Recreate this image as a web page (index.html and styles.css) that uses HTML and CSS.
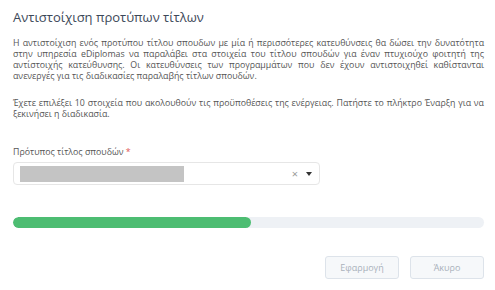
FILE: index.html
```html
<!DOCTYPE html>
<html lang="el">
<head>
    <meta charset="UTF-8">
    <meta name="viewport" content="width=device-width, initial-scale=1.0">
    <title>Αντιστοίχιση προτύπων τίτλων</title>
    <link rel="stylesheet" href="styles.css">
</head>
<body>
    <div class="dialog">
        <h1 class="dialog-title">Αντιστοίχιση προτύπων τίτλων</h1>
        <p class="text">Η αντιστοίχιση ενός προτύπου τίτλου σπουδων με μία ή περισσότερες κατευθύνσεις θα δώσει την δυνατότητα στην υπηρεσία eDiplomas να παραλάβει στα στοιχεία του τίτλου σπουδών για έναν πτυχιούχο φοιτητή της αντίστοιχής κατεύθυνσης. Οι κατευθύνσεις των προγραμμάτων που δεν έχουν αντιστοιχηθεί καθίστανται ανενεργές για τις διαδικασίες παραλαβής τίτλων σπουδών.</p>
        <p class="text">Έχετε επιλέξει 10 στοιχεία που ακολουθούν τις προϋποθέσεις της ενέργειας. Πατήστε το πλήκτρο Έναρξη για να ξεκινήσει η διαδικασία.</p>

        <div class="field">
            <label class="field-label">Πρότυπος τίτλος σπουδών <span class="req">*</span></label>
            <div class="select">
                <span class="select-value"></span>
                <span class="select-clear">&times;</span>
                <span class="select-arrow"></span>
            </div>
        </div>

        <div class="progress">
            <div class="progress-bar" style="width: 50.5%"></div>
        </div>

        <div class="actions">
            <button class="btn" disabled>Εφαρμογή</button>
            <button class="btn" disabled>Άκυρο</button>
        </div>
    </div>
</body>
</html>
```

FILE: styles.css
```css
body {
    margin: 0;
    background-color: #fff;
    font-family: "Open Sans", Arial, sans-serif;
    color: #555;
}

.dialog {
    padding: 8px 11px 0 13px;
}

.dialog-title {
    margin: 0 0 12px;
    font-size: 13px;
    font-weight: 400;
    color: #3c4858;
    line-height: 18px;
}

.text {
    margin: 0 0 16px;
    font-size: 8.8px;
    line-height: 11px;
    text-align: justify;
}

.field {
    margin-top: 27px;
}

.field-label {
    display: block;
    font-size: 8.8px;
    line-height: 11px;
    margin-bottom: 4px;
}

.req {
    color: #e05555;
}

.select {
    box-sizing: border-box;
    width: 307px;
    height: 23px;
    border: 1px solid #e6e6e6;
    border-radius: 4px;
    display: flex;
    align-items: center;
    padding: 0 7px 0 6px;
}

.select-value {
    width: 164px;
    height: 16px;
    background-color: #c4c4c4;
}

.select-clear {
    margin-left: auto;
    font-size: 11px;
    color: #999;
    margin-right: 8px;
}

.select-arrow {
    width: 0;
    height: 0;
    border-left: 3.5px solid transparent;
    border-right: 3.5px solid transparent;
    border-top: 4px solid #333;
}

.progress {
    margin-top: 32px;
    height: 11px;
    background-color: #eef1f5;
    border-radius: 6px;
    overflow: hidden;
}

.progress-bar {
    height: 100%;
    background-color: #4dbd72;
    border-radius: 6px;
}

.actions {
    display: flex;
    justify-content: flex-end;
    gap: 11px;
    margin-top: 28px;
}

.btn {
    width: 74px;
    height: 23px;
    border: 1px solid #dde3ea;
    border-radius: 3px;
    background-color: #f6f8fa;
    color: #a9b1ba;
    font-family: "Open Sans", Arial, sans-serif;
    font-size: 9px;
}
```
